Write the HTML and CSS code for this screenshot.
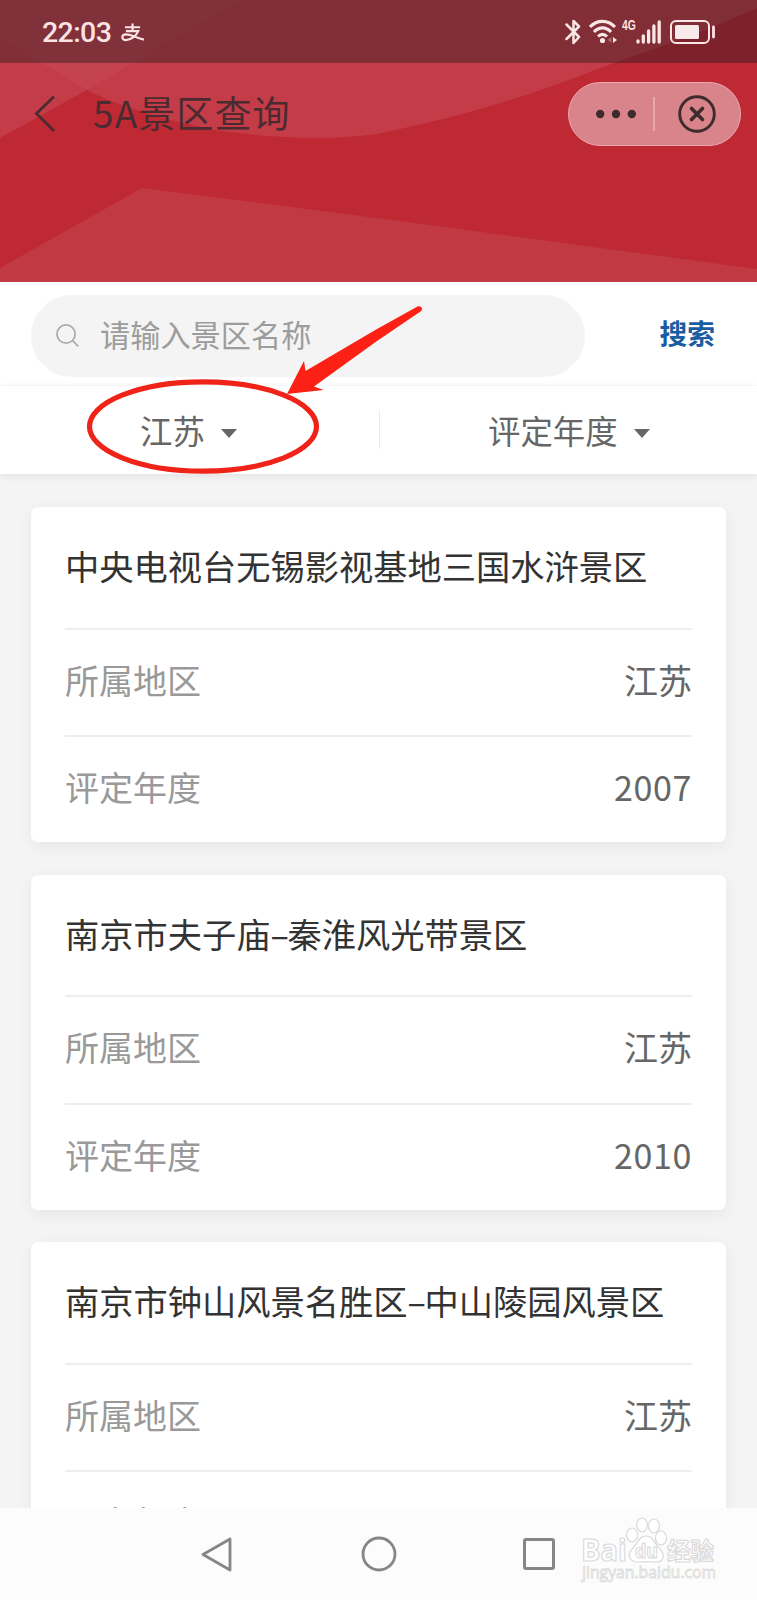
FILE: index.html
```html
<!DOCTYPE html>
<html lang="zh-CN">
<head>
<meta charset="utf-8">
<title>5A景区查询</title>
<link rel="stylesheet" href="styles.css">
</head>
<body>
<div class="screen">
  <header class="hero">
    <svg class="hero-bg" viewBox="0 0 757 282" preserveAspectRatio="none" aria-hidden="true">
      <rect width="757" height="282" fill="#be2934"/>
      <path d="M0 0H240L135 62L87 90L0 138Z" fill="#c53c49"/>
      <path d="M0 0H757V8C690 38 645 52 600 68C530 96 460 117 377 134C315 142 260 136 215 130C165 120 120 107 87 90L45 65L0 38Z" fill="#c53c49"/>
      <path d="M0 0H240L135 62L87 90L45 65L0 38Z" fill="#c5424f"/>
      <path d="M0 268L142 188L377 218L757 269V282H0Z" fill="#c13942"/>
    </svg>
    <div class="status">
      <span class="clock">22:03</span>
      <svg class="pay" viewBox="0 0 26 20" fill="none" stroke="#fae3e3" stroke-width="2.300">
        <path d="M4 4.500H20M12 .5V8M5 8.500H18C16 13 11 18 5 18C0 18 0 12 5 12C11 12 16 16 24 17.500"/>
      </svg>
      <div class="status-icons">
        <svg class="bluetooth" viewBox="0 0 16 26" fill="none" stroke="#fae6e6" stroke-width="2.500" stroke-linejoin="round" stroke-linecap="round">
          <path d="M1.500 5.500L14 18L8.500 24V2L14 7.500L1.500 20"/>
        </svg>
        <svg class="wifi" viewBox="0 0 28 25" fill="none" stroke="#fae6e6" stroke-width="3.100">
          <path d="M1 8C8 .5 19 .5 26 8M5 13C10 7.500 17 7.500 22 13M9 17.500C12 14.500 15 14.500 18 17.500"/>
          <circle cx="13.500" cy="21.500" r="2.600" fill="#fae6e6" stroke="none"/>
          <path d="M24 18L28 21L24 24Z" fill="#fae6e6" stroke="none"/>
          <path d="M22.500 18L18.500 21L22.500 24Z" fill="#a5656b" stroke="none"/>
        </svg>
        <span class="net">4G</span>
        <svg class="signal" viewBox="0 0 26 24" stroke="#fae6e6" stroke-width="3.300" stroke-linecap="round">
          <path d="M2 21V22M7.300 16V22M12.600 11V22M17.900 6V22M23.200 2V22"/>
        </svg>
        <svg class="battery" viewBox="0 0 46 24" fill="none" stroke="#fae6e6" stroke-width="2">
          <rect x="1" y="1" width="38" height="22" rx="5"/>
          <rect x="5" y="5" width="24" height="14" rx="1.500" fill="#f8eaea" stroke="none"/>
          <path d="M43.500 7V17" stroke-width="2.800" stroke-linecap="round"/>
        </svg>
      </div>
    </div>
    <div class="titlebar">
      <svg class="back" viewBox="0 0 22 38" fill="none" stroke="#4b2b30" stroke-width="2.800"><path d="M20 1.500L2.500 18.500L20 36"/></svg>
      <h1 class="page-title">5A景区查询</h1>
      <div class="capsule">
        <svg class="dots" viewBox="0 0 40 10" fill="#3e2b2e"><circle cx="4.200" cy="5" r="4.200"/><circle cx="20" cy="5" r="4.200"/><circle cx="35.800" cy="5" r="4.200"/></svg>
        <span class="capsule-line"></span>
        <svg class="close" viewBox="0 0 38 38" fill="none" stroke="#3e2b2e"><circle cx="19" cy="19" r="17.300" stroke-width="2.900"/><path d="M13.500 13.500L24.500 24.500M24.500 13.500L13.500 24.500" stroke-width="3.600" stroke-linecap="round"/></svg>
      </div>
    </div>
  </header>

  <section class="search">
    <div class="search-box">
      <svg class="magnifier" viewBox="0 0 24 24" fill="none" stroke="#aaa" stroke-width="1.800"><circle cx="10.500" cy="10.500" r="9.500"/><path d="M17.500 17.500L23.300 23.300"/></svg>
      <div class="field">请输入景区名称</div>
    </div>
    <span class="search-btn">搜索</span>
  </section>

  <section class="filters">
    <div class="filter"><span>江苏</span><i class="caret"></i></div>
    <span class="filter-line"></span>
    <div class="filter filter-year"><span>评定年度</span><i class="caret"></i></div>
  </section>

  <main class="list">
    <article class="card">
      <h2 class="card-title">中央电视台无锡影视基地三国水浒景区</h2>
      <div class="row"><span class="label">所属地区</span><span class="value">江苏</span></div>
      <div class="row"><span class="label">评定年度</span><span class="value year">2007</span></div>
    </article>
    <article class="card">
      <h2 class="card-title">南京市夫子庙<span class="dash">–</span>秦淮风光带景区</h2>
      <div class="row"><span class="label">所属地区</span><span class="value">江苏</span></div>
      <div class="row"><span class="label">评定年度</span><span class="value year">2010</span></div>
    </article>
    <article class="card">
      <h2 class="card-title">南京市钟山风景名胜区<span class="dash">–</span>中山陵园风景区</h2>
      <div class="row"><span class="label">所属地区</span><span class="value">江苏</span></div>
      <div class="row"><span class="label">评定年度</span></div>
    </article>
  </main>

  <nav class="nav">
    <svg class="nav-back" viewBox="0 0 31 35" fill="none" stroke="#868686" stroke-width="2.800" stroke-linejoin="round"><path d="M29 2V33L2 17.500Z"/></svg>
    <svg class="nav-home" viewBox="0 0 36 36" fill="none" stroke="#868686" stroke-width="2.800"><circle cx="18" cy="18" r="16"/></svg>
    <svg class="nav-recent" viewBox="0 0 32 32" fill="none" stroke="#868686" stroke-width="3"><rect x="1.500" y="1.500" width="29" height="29" rx="1.500"/></svg>
  </nav>

  <svg class="mark" viewBox="0 0 757 170" aria-hidden="true">
    <ellipse cx="203" cy="126.500" rx="113.500" ry="44.700" fill="none" stroke="#f02318" stroke-width="5.200"/>
    <path d="M287 94L304 61L305.500 71L377 29L417.500 6.500C421 5 424 9 420.500 11.500L377 41L314 86.500L323.500 90Z" fill="#fd2115"/>
  </svg>

  <svg class="watermark" viewBox="0 0 150 72" fill="#fff" stroke="#dadada" stroke-width="1.200" aria-hidden="true">
    <text class="wm-brand" x="5" y="48" textLength="46" lengthAdjust="spacingAndGlyphs">Bai</text>
    <ellipse cx="56" cy="22" rx="5.500" ry="7"/><ellipse cx="66" cy="12" rx="5.300" ry="7"/><ellipse cx="78" cy="13" rx="5.500" ry="7"/><ellipse cx="85" cy="25" rx="5.500" ry="7"/>
    <path d="M70 23C63 23 62 30 57 35C49 43 55 49 62 49C67 49 73 48 78 49C86 50 91 44 84 36C78 31 78 23 70 23Z"/>
    <text class="wm-du" x="59" y="45" textLength="23" lengthAdjust="spacingAndGlyphs">du</text>
    <text class="wm-cn" x="91" y="47" textLength="47" lengthAdjust="spacingAndGlyphs">经验</text>
    <text class="wm-url" x="6" y="65" textLength="134" lengthAdjust="spacingAndGlyphs">jingyan.baidu.com</text>
  </svg>
</div>
</body>
</html>
```
FILE: styles.css
```css
* { box-sizing: border-box; }
body { margin: 0; font-family: "Noto Sans CJK SC", sans-serif; }
svg { display: block; flex: none; }
.screen {
  position: relative;
  display: flex;
  flex-direction: column;
  width: 757px;
  height: 1600px;
  overflow: hidden;
  background: #f4f4f4;
}

.hero { position: relative; flex: none; height: 282px; }
.hero-bg { position: absolute; inset: 0; width: 757px; height: 282px; }
.status {
  position: relative;
  display: flex;
  align-items: center;
  height: 63px;
  padding: 0 41px 0 42px;
  background: rgba(27, 24, 27, .4);
  color: #fae3e3;
}
.clock {
  width: 79px;
  font: 500 28.5px/40px Roboto, sans-serif;
  letter-spacing: -.6px;
  padding-top: 3px;
}
.pay { width: 25px; height: 19px; margin-top: 1px; }
.status-icons { display: flex; align-items: center; margin-left: auto; }
.bluetooth { width: 16px; height: 26px; margin-right: 8px; }
.wifi { width: 28px; height: 25px; margin-right: 5px; }
.net {
  width: 14px;
  font: 700 14px/14px "Liberation Sans", sans-serif;
  transform: scaleX(.74);
  transform-origin: left;
  margin-bottom: 13px;
}
.signal { width: 26px; height: 24px; margin-right: 8px; }
.battery { width: 46px; height: 24px; }
.titlebar {
  position: relative;
  display: flex;
  align-items: center;
  height: 101px;
  padding: 0 16px 0 34px;
}
.back { width: 22px; height: 38px; }
.page-title {
  margin: 0 0 4px 37px;
  font-size: 37px;
  font-weight: 400;
  line-height: 50px;
  letter-spacing: 1.1px;
  color: #4b2b30;
}
.capsule {
  display: flex;
  align-items: center;
  width: 173px;
  height: 64px;
  margin-left: auto;
  padding: 0 24px 0 27px;
  border: 1px solid #eda9b0;
  border-radius: 32px;
  background: #d8848a;
}
.dots { width: 40px; height: 10px; }
.capsule-line { width: 1.5px; height: 34px; margin-left: 17px; background: #e8a7ad; }
.close { width: 38px; height: 38px; margin-left: auto; }

.search {
  flex: none;
  display: flex;
  align-items: center;
  height: 104px;
  padding: 4px 42px 0 31px;
  background: #fff;
  border-bottom: 1px solid #fafafa;
}
.search-box {
  display: flex;
  align-items: center;
  width: 554px;
  height: 82px;
  margin-top: 5px;
  padding: 0 48px 0 25px;
  margin-bottom: 5px;
  border-radius: 41px;
  background: #f4f4f4;
}
.magnifier { width: 23px; height: 23px; }
.field {
  flex: 1;
  height: 54px;
  padding-left: 21px;
  font-size: 30.2px;
  line-height: 50px;
  color: #9c9c9c;
}
.search-btn {
  margin: 0 0 7px auto;
  font-size: 27.7px;
  font-weight: 700;
  line-height: 40px;
  color: #1a5da1;
}

.filters {
  flex: none;
  position: relative;
  display: flex;
  align-items: center;
  height: 88px;
  background: #fff;
  box-shadow: 0 2px 8px rgba(0, 0, 0, .08);
  color: #666;
  font-size: 32.4px;
  line-height: 46px;
}
.filter {
  display: flex;
  align-items: center;
  width: 379px;
  gap: 16px;
  padding-left: 140px;
}
.filter-year { width: 377px; padding-left: 108px; }
.filter-line { width: 1px; height: 38px; background: #e9e9e9; }
.caret {
  border: 8px solid transparent;
  border-top: 9px solid #666;
  border-bottom: 0;
  margin-top: 6px;
}

.list {
  flex: 1;
  min-height: 0;
  overflow: hidden;
  display: flex;
  flex-direction: column;
  gap: 32.5px;
  padding: 33px 31px 0;
}
.card {
  flex: none;
  height: 335px;
  padding: 0 34px;
  border-radius: 7px;
  background: #fff;
  box-shadow: 0 4px 16px rgba(0, 0, 0, .06);
}
.card-title {
  display: flex;
  height: 120.5px;
  margin: 0;
  font-size: 34.25px;
  font-weight: 400;
  line-height: 117px;
  color: #333;
  white-space: nowrap;
}
.dash { width: 17px; text-align: center; }
.row {
  display: flex;
  justify-content: space-between;
  height: 107.5px;
  border-top: 2px solid #eee;
  font-size: 34px;
  line-height: 100px;
}
.label { color: #999; }
.value { color: #666; }
.year { letter-spacing: .6px; }

.nav {
  position: relative;
  flex: none;
  display: flex;
  align-items: center;
  height: 92px;
  padding-left: 201px;
  background: #fcfcfc;
}
.nav-back { width: 31px; height: 35px; }
.nav-home { width: 36px; height: 36px; margin-left: 128.5px; }
.nav-recent { width: 32px; height: 32px; margin-left: 126.5px; }

.mark { position: absolute; left: 0; top: 300px; width: 757px; height: 170px; overflow: visible; }
.watermark { position: absolute; left: 576px; top: 1513px; width: 150px; height: 72px; overflow: visible; }
.wm-brand { font: 700 31px "Open Sans", sans-serif; }
.wm-du { font: 700 20px "Open Sans", sans-serif; }
.wm-cn { font: 700 24px "Noto Sans CJK SC", sans-serif; }
.wm-url { font: 400 16px "Open Sans", sans-serif; stroke-width: .8px; }
```
